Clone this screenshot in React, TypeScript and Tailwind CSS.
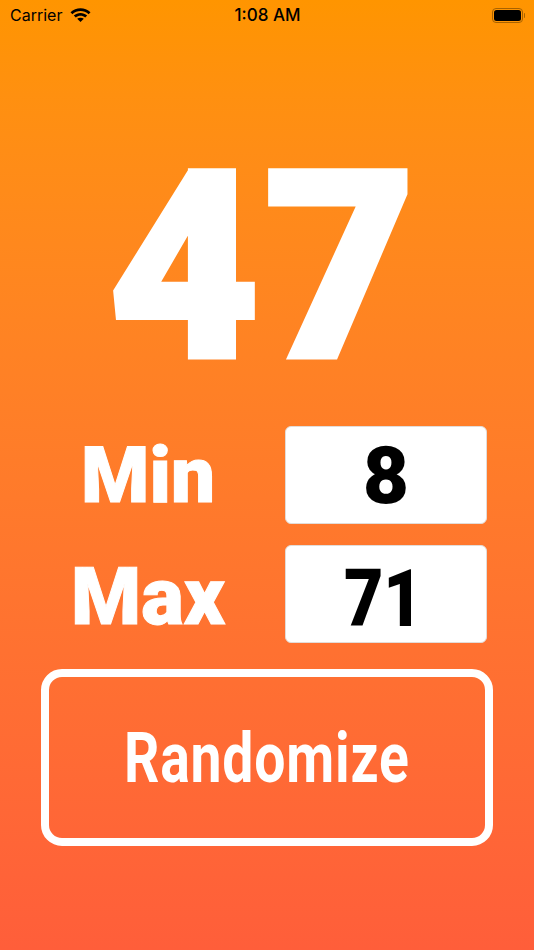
export default function App() {
  return (
    <div className="flex h-[950px] w-[534px] flex-col overflow-hidden bg-gradient-to-b from-[#ff9500] to-[#ff5e3a] font-['Roboto',sans-serif] text-white">
      {/* Status bar */}
      <div className="grid h-[30px] grid-cols-3 items-center pl-[10px] pr-[9px] font-['Inter',sans-serif] text-black">
        <div className="flex items-center gap-[8px]">
          <span className="text-[16px] leading-none">Carrier</span>
          <svg width="21" height="15" viewBox="0 0 21 15" className="mt-[-1px]">
            <path d="M0.5 5.2 C6 0 15 0 20.5 5.2 L18.6 7.2 C14 3 7 3 2.4 7.2 Z" fill="#000" />
            <path d="M3.8 8.5 C7.5 5 13.5 5 17.2 8.5 L15.2 10.5 C12.5 8.2 8.5 8.2 5.8 10.5 Z" fill="#000" />
            <path d="M7.2 11.8 C9 10.3 12 10.3 13.8 11.8 L10.5 15 Z" fill="#000" />
          </svg>
        </div>
        <span className="text-center text-[17px] font-medium leading-none">1:08 AM</span>
        <div className="flex items-center justify-end">
          <div className="flex h-[15px] w-[31px] items-center rounded-[4px] border border-[#a86200] p-[1px]">
            <div className="h-full w-full rounded-[2.5px] bg-black" />
          </div>
          <div className="ml-[1px] h-[5px] w-[1.5px] rounded-r-sm bg-[#a86200]" />
        </div>
      </div>

      {/* Result */}
      <div className="flex h-[396px] items-center justify-center pr-[6px] pt-[80px]">
        <span className="text-[262px] font-black leading-none tracking-[4px] [-webkit-text-stroke:5px_white]">47</span>
      </div>

      {/* Min / Max */}
      <div className="flex flex-col gap-[21px] pl-[48px] pr-[47px]">
        <div className="flex items-center">
          <span className="w-[200px] pt-[1px] text-center text-[78px] font-black leading-none [-webkit-text-stroke:1px_white]">Min</span>
          <div className="ml-auto flex h-[98px] w-[202px] items-center justify-center rounded-[6px] border border-[#e2dcd8] bg-white pt-[1px]">
            <span className="text-[80px] font-black leading-none text-black">8</span>
          </div>
        </div>
        <div className="flex items-center">
          <span className="w-[200px] pt-[6px] text-center text-[80px] font-black leading-none [-webkit-text-stroke:1px_white]">Max</span>
          <div className="ml-auto flex h-[98px] w-[202px] items-center justify-center rounded-[6px] border border-[#e2dcd8] bg-white pr-[5px] pt-[9px]">
            <span className="scale-x-[0.85] text-[80px] font-black leading-none text-black">71</span>
          </div>
        </div>
      </div>

      {/* Button */}
      <div className="mt-[26px] px-[41px]">
        <button className="flex h-[177px] w-full items-center justify-center rounded-[21px] border-[8px] border-white">
          <span className="scale-x-[0.79] text-[70px] font-bold leading-none tracking-[1px]">Randomize</span>
        </button>
      </div>
    </div>
  );
}
